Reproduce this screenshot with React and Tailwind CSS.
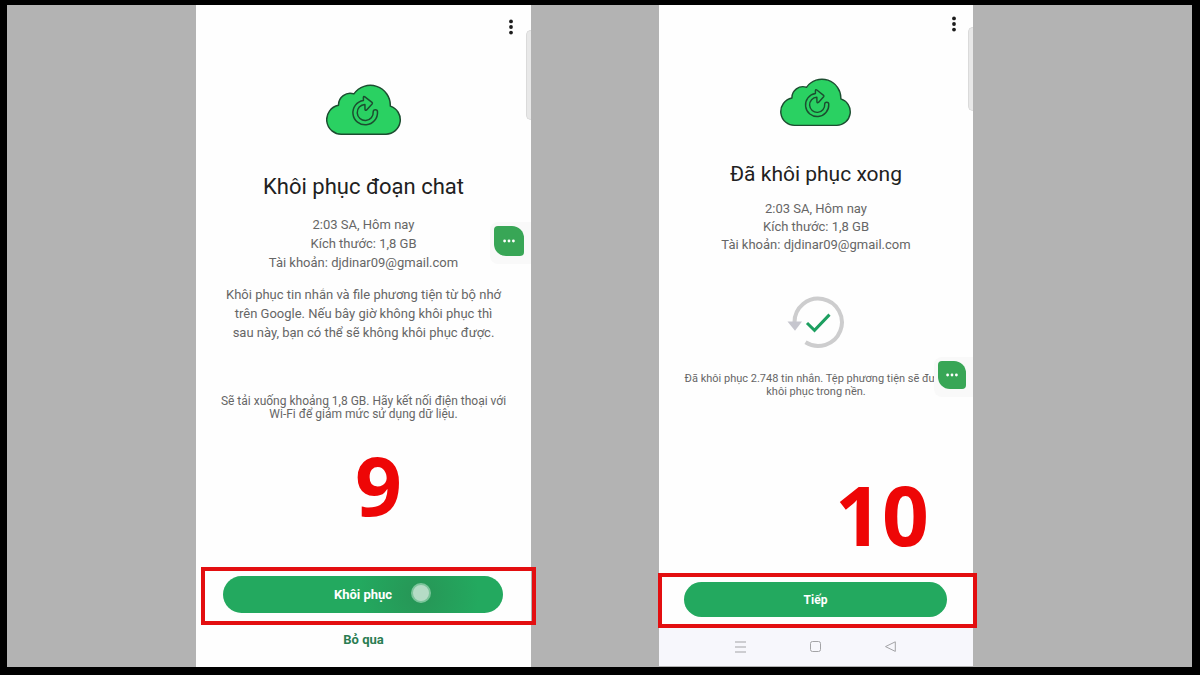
import { clsx } from 'clsx'

function CloudIcon({ className }) {
  return (
    <svg viewBox="0 0 76 54" className={className} fill="none" stroke="#1c4d30" strokeWidth="1.5" strokeLinejoin="round" aria-hidden="true">
      <path
        fill="#2ad162"
        d="M16.2 51.2A14.6 14.6 0 0 1 12.5 22.3A11.7 11.7 0 0 1 27.9 10.9A20 20 0 0 1 64.3 23.1A14.4 14.4 0 0 1 60 51.2Z"
      />
      <path d="M51.5 28.8A12.3 12.3 0 1 1 37.4 17.4L37.4 14.4Q37.6 12.9 38.9 13.8L46 19.4Q46.8 20.1 46.1 20.9L40.6 26.9Q39.2 27.9 39 26.3L38.9 21.5A8 8 0 1 0 47.2 28.8A2.15 2.15 0 0 1 51.5 28.8Z" />
    </svg>
  )
}

function RestoredIcon() {
  return (
    <svg viewBox="0 0 58 54" className="h-[54px] w-[58px]" fill="none" aria-hidden="true">
      <path d="M7.5 26.3A23.7 23.7 0 1 1 18.5 46.3" stroke="#cdcdce" strokeWidth="4" />
      <path d="M0.5 25.6H15L8 34.8Z" fill="#c6c6ce" />
      <path d="M20 27L27.5 34.3L42.5 18.6" stroke="#1d9f60" strokeWidth="3" />
    </svg>
  )
}

function MoreButton() {
  return (
    <button type="button" aria-label="Menu" className="flex h-6 w-6 items-center justify-center">
      <svg viewBox="0 0 4 16" className="h-4 w-1" fill="#1c1c1c" aria-hidden="true">
        <circle cx="2" cy="2.4" r="1.9" />
        <circle cx="2" cy="8" r="1.9" />
        <circle cx="2" cy="13.6" r="1.9" />
      </svg>
    </button>
  )
}

function ChatBubble({ className, buttonClassName }) {
  return (
    <div className={clsx('absolute right-0 rounded-l-lg bg-[#f9f9f9] pt-1 pb-2 pl-1', className)}>
      <button
        type="button"
        aria-label="Chat"
        className={clsx(
          'flex items-center justify-center rounded-tl-sm rounded-tr-xl rounded-br-sm rounded-bl-xl bg-[#38a656]',
          buttonClassName,
        )}
      >
        <svg viewBox="0 0 12 4" className="h-1 w-3" fill="#ffffff" aria-hidden="true">
          <circle cx="1.6" cy="2" r="1.4" />
          <circle cx="6" cy="2" r="1.4" />
          <circle cx="10.4" cy="2" r="1.4" />
        </svg>
      </button>
    </div>
  )
}

function EdgeHandle({ className }) {
  return <div className={clsx('absolute right-0 w-[5px] rounded-l-md border border-r-0 border-[#dadada] bg-[#e8e8e8]', className)} />
}

function Lines({ items, className }) {
  return (
    <p className={clsx('whitespace-nowrap text-center text-[#666666]', className)}>
      {items.map((line) => (
        <span key={line} className="block">{line}</span>
      ))}
    </p>
  )
}

function RestoreScreen() {
  return (
    <section className="relative col-start-2 flex flex-col bg-[#fefefe]">
      <header className="flex h-[44px] items-center justify-end pr-2">
        <MoreButton />
      </header>
      <EdgeHandle className="top-[25px] h-[90px]" />
      <CloudIcon className="mt-[34px] h-[54px] w-[76px] self-center" />
      <h1 className="mt-9 text-center text-[22px] leading-7 text-[#212121]">Khôi phục đoạn chat</h1>
      <Lines
        className="mt-3.5 text-[13px] leading-[19px]"
        items={['2:03 SA, Hôm nay', 'Kích thước: 1,8 GB', 'Tài khoản: djdinar09@gmail.com']}
      />
      <Lines
        className="mt-[13px] text-[13px] leading-[19px]"
        items={[
          'Khôi phục tin nhắn và file phương tiện từ bộ nhớ',
          'trên Google. Nếu bây giờ không khôi phục thì',
          'sau này, bạn có thể sẽ không khôi phục được.',
        ]}
      />
      <Lines
        className="mt-[53px] text-[12px] leading-[13px]"
        items={['Sẽ tải xuống khoảng 1,8 GB. Hãy kết nối điện thoại với', 'Wi-Fi để giảm mức sử dụng dữ liệu.']}
      />
      <ChatBubble className="top-[217px] pr-[7px]" buttonClassName="h-[30px] w-[30px]" />
      <div className="mt-[22px] pl-[30px] text-center font-['Open_Sans'] text-[82px] leading-none font-bold text-[#ee0606]">9</div>
      <div className="mt-auto -mr-[5px] ml-[5px] border-4 border-[#e30e10] pt-[5px] pr-[29px] pb-2 pl-[18px]">
        <button
          type="button"
          className="relative h-[37px] w-full rounded-full bg-[#23a95f] bg-radial-[ellipse_60px_60px_at_70%_50%] from-[#279556] to-[#23a95f] text-[13px] font-bold text-white"
        >
          Khôi phục
          <span className="absolute top-[7px] left-[67%] h-5 w-5 rounded-full border-2 border-[#7cc59b] bg-[#b5dcc6]" />
        </button>
      </div>
      <button type="button" className="mb-3 h-[30px] self-center text-[13px] font-bold text-[#2a7d52]">Bỏ qua</button>
    </section>
  )
}

function DoneScreen() {
  return (
    <section className="relative col-start-4 mb-px flex flex-col bg-[#fefefe]">
      <header className="flex h-[38px] items-center justify-end pr-[7px]">
        <MoreButton />
      </header>
      <EdgeHandle className="top-[22px] h-[84px]" />
      <CloudIcon className="mt-[34px] h-[51px] w-[72px] self-center" />
      <h1 className="mt-8 text-center text-[21px] leading-7 text-[#212121]">Đã khôi phục xong</h1>
      <Lines
        className="mt-3 text-[13px] leading-[18px]"
        items={['2:03 SA, Hôm nay', 'Kích thước: 1,8 GB', 'Tài khoản: djdinar09@gmail.com']}
      />
      <div className="mt-[42px] flex justify-center">
        <RestoredIcon />
      </div>
      <Lines
        className="mt-[22px] text-[11px] leading-[13px]"
        items={['Đã khôi phục 2.748 tin nhắn. Tệp phương tiện sẽ được', 'khôi phục trong nền.']}
      />
      <ChatBubble className="top-[352px] pr-[7px]" buttonClassName="h-7 w-7" />
      <div className="mt-auto pl-[132px] text-center font-['Open_Sans'] text-[82px] leading-none font-bold text-[#ee0606]">10</div>
      <div className="mt-[18px] -mr-1 -ml-px border-4 border-[#e30e10] pt-[5px] pr-[26px] pb-[7px] pl-[22px]">
        <button type="button" className="h-[35px] w-full rounded-full bg-[#23a95f] text-[12px] font-bold text-white">Tiếp</button>
      </div>
      <nav className="flex h-[38px] items-center justify-center gap-[63px] bg-[#f7f7fc]">
        <button type="button" aria-label="Recents">
          <svg viewBox="0 0 12 12" className="h-3 w-3" stroke="#a3a3a6" aria-hidden="true">
            <path d="M0 1H11M0 6H11M0 11H11" />
          </svg>
        </button>
        <button type="button" aria-label="Home">
          <svg viewBox="0 0 12 12" className="h-3 w-3" fill="none" stroke="#a3a3a6" aria-hidden="true">
            <rect x="0.5" y="0.5" width="10" height="10" rx="2" />
          </svg>
        </button>
        <button type="button" aria-label="Back">
          <svg viewBox="0 0 12 12" className="h-3 w-3" fill="none" stroke="#a3a3a6" strokeLinejoin="round" aria-hidden="true">
            <path d="M10.3 0.8V10.4L0.5 5.6Z" />
          </svg>
        </button>
      </nav>
    </section>
  )
}

export default function App() {
  return (
    <main className="grid min-h-screen grid-cols-[189fr_335fr_128fr_314fr_219fr] border-t-5 border-r-8 border-b-8 border-l-7 border-black bg-[#b3b3b3] font-[Roboto,sans-serif]">
      <RestoreScreen />
      <DoneScreen />
    </main>
  )
}
